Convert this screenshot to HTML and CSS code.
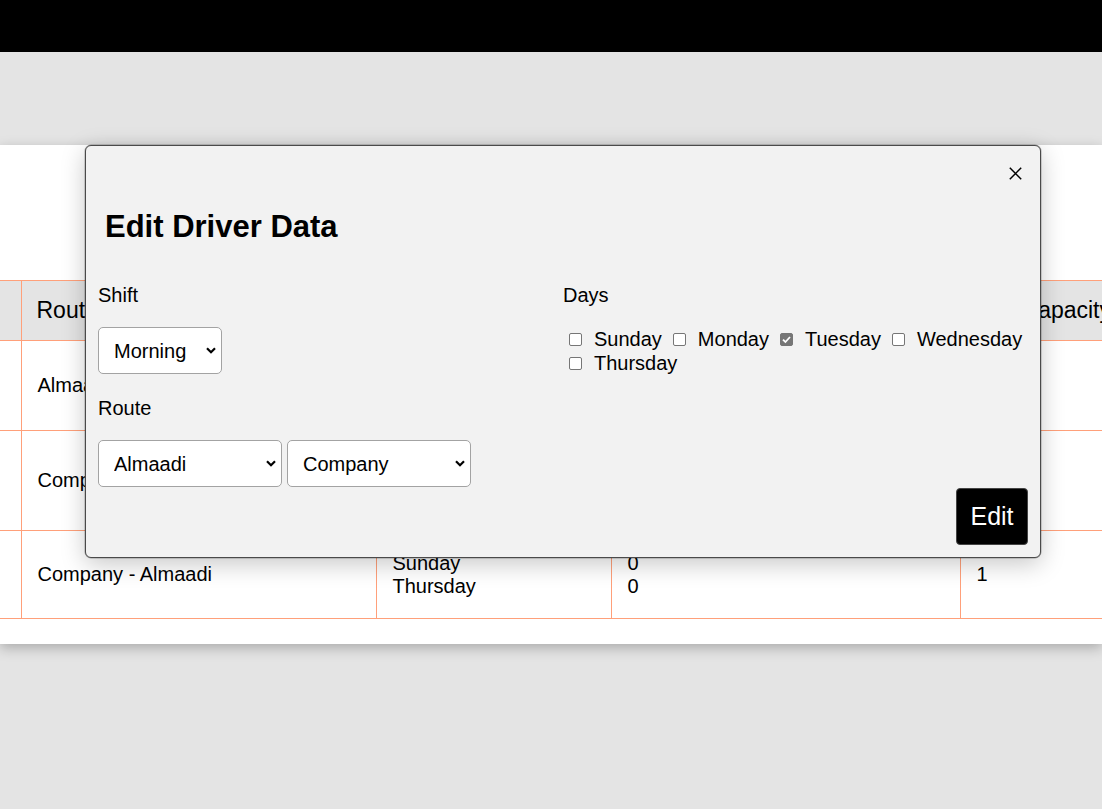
FILE: index.html
```html
<!DOCTYPE html>
<html lang="en">
<head>
<meta charset="utf-8">
<title>Drivers</title>
<link rel="stylesheet" href="styles.css">
</head>
<body>
<header class="topbar"></header>
<main class="page">
  <section class="card">
    <table class="drivers">
      <colgroup>
        <col class="c1"><col class="c2"><col class="c3"><col class="c4"><col class="c5">
      </colgroup>
      <thead>
        <tr><th></th><th>Route</th><th>Days</th><th>Seats</th><th>Bus Capacity</th></tr>
      </thead>
      <tbody>
        <tr class="r1"><td></td><td>Almaadi - Company</td><td>Tuesday</td><td>0</td><td>1</td></tr>
        <tr class="r2"><td></td><td>Company - Almaadi</td><td>Monday<br>Wednesday</td><td>0<br>0</td><td>1</td></tr>
        <tr class="r3"><td></td><td>Company - Almaadi</td><td>Sunday<br>Thursday</td><td>0<br>0</td><td>1</td></tr>
      </tbody>
    </table>
  </section>
</main>

<div class="modal">
  <div class="modal-top">
    <button class="close" type="button" aria-label="Close">
      <svg width="13" height="13" viewBox="0 0 13 13"><path d="M0.8 0.8 L12.2 12.2 M12.2 0.8 L0.8 12.2" stroke="#000" stroke-width="1.5" fill="none"/></svg>
    </button>
  </div>
  <h2 class="modal-title">Edit Driver Data</h2>
  <div class="form">
    <div class="col">
      <span class="field-label">Shift</span>
      <div class="select-row">
        <div class="select w-shift">
          <select><option>Morning</option><option>Evening</option></select>
          <svg class="chev" width="10" height="7" viewBox="0 0 10 7"><path d="M1 1.2 L5 5.2 L9 1.2" stroke="#000" stroke-width="2.2" fill="none"/></svg>
        </div>
      </div>
      <span class="field-label">Route</span>
      <div class="select-row last">
        <div class="select w-route">
          <select><option>Almaadi</option><option>Company</option></select>
          <svg class="chev" width="10" height="7" viewBox="0 0 10 7"><path d="M1 1.2 L5 5.2 L9 1.2" stroke="#000" stroke-width="2.2" fill="none"/></svg>
        </div>
        <div class="select w-route">
          <select><option>Company</option><option>Almaadi</option></select>
          <svg class="chev" width="10" height="7" viewBox="0 0 10 7"><path d="M1 1.2 L5 5.2 L9 1.2" stroke="#000" stroke-width="2.2" fill="none"/></svg>
        </div>
      </div>
    </div>
    <div class="col">
      <span class="field-label">Days</span>
      <div class="days">
        <label class="day"><span class="box"></span>Sunday</label>
        <label class="day"><span class="box"></span>Monday</label>
        <label class="day"><span class="box checked"><svg width="11" height="11" viewBox="0 0 11 11"><path d="M2 5.6 L4.4 8 L9 3" stroke="#fff" stroke-width="1.8" fill="none"/></svg></span>Tuesday</label>
        <label class="day"><span class="box"></span>Wednesday</label>
        <label class="day"><span class="box"></span>Thursday</label>
      </div>
    </div>
  </div>
  <div class="modal-footer">
    <button class="edit-btn" type="button">Edit</button>
  </div>
</div>
</body>
</html>
```

FILE: styles.css
```css
* { box-sizing: border-box; }
html, body { margin: 0; padding: 0; overflow: hidden; }
body {
  position: relative;
  width: 1102px;
  height: 809px;
  background: #e4e4e4;
  font-family: "Liberation Sans", Arial, sans-serif;
  color: #000;
}
.topbar { height: 52px; background: #000; }
.page { padding-top: 93px; }
.card {
  background: #fff;
  padding: 135px 0 25px;
  box-shadow: 0 4px 12px rgba(0, 0, 0, 0.25);
  overflow: hidden;
}
.drivers {
  border-collapse: collapse;
  table-layout: fixed;
  width: 1260px;
  font-size: 20px;
}
.c1 { width: 21px; }
.c2 { width: 355px; }
.c3 { width: 235px; }
.c4 { width: 349px; }
.c5 { width: 300px; }
.drivers th, .drivers td {
  border: 1px solid #ffa07a;
  padding: 0 16px;
  text-align: left;
  vertical-align: middle;
  font-weight: normal;
  white-space: nowrap;
  overflow: hidden;
}
.drivers tr > :first-child { border-left: none; padding: 0; }
.drivers th { background: #e4e4e4; font-size: 23px; padding-left: 15px; }
.drivers thead tr { height: 60px; }
.r1 { height: 90px; }
.r2 { height: 100px; }
.r3 { height: 88px; }

.modal {
  position: absolute;
  left: 85px;
  top: 145px;
  width: 956px;
  background: #f2f2f2;
  border: 1px solid #4a4a4a;
  border-radius: 6px;
  padding: 12px;
  box-shadow: 0 0 0 0.5px rgba(0, 0, 0, 0.3), 0 6px 24px rgba(0, 0, 0, 0.22);
}
.modal-top { display: flex; justify-content: flex-end; }
.close {
  width: 26px;
  height: 26px;
  margin-top: 2px;
  padding: 0;
  border: 0;
  background: none;
  display: flex;
  align-items: center;
  justify-content: center;
}
.modal-title {
  margin: 23px 0 0 7px;
  font-size: 31px;
  line-height: 36px;
  font-weight: bold;
}
.form {
  display: grid;
  grid-template-columns: 1fr 1fr;
  margin-top: 39px;
}
.field-label {
  display: block;
  font-size: 20px;
  line-height: 23px;
  margin-bottom: 20px;
}
.select-row { display: flex; gap: 5px; margin-bottom: 23px; }
.select-row.last { margin-bottom: 0; }
.select { display: inline-grid; }
.select > * { grid-area: 1 / 1; }
.w-shift { width: 124px; }
.w-route { width: 184px; }
.select select {
  appearance: none;
  -webkit-appearance: none;
  width: 100%;
  height: 47px;
  margin: 0;
  border: 1px solid #a3a3a3;
  border-radius: 5px;
  background: #fff;
  color: #000;
  font-family: "Liberation Sans", Arial, sans-serif;
  font-size: 20px;
  padding: 0 0 0 15px;
}
.chev {
  justify-self: end;
  align-self: center;
  margin-right: 6px;
  pointer-events: none;
}
.days {
  display: flex;
  flex-wrap: wrap;
  column-gap: 5px;
  font-size: 20px;
  line-height: 24px;
}
.day {
  display: inline-flex;
  align-items: center;
  gap: 12px;
  padding-left: 6px;
}
.box {
  width: 13px;
  height: 13px;
  border: 1px solid #767676;
  border-radius: 2px;
  background: #fff;
  display: flex;
  align-items: center;
  justify-content: center;
}
.box.checked { background: #767676; }
.modal-footer {
  display: flex;
  justify-content: flex-end;
  margin-top: 1px;
}
.edit-btn {
  width: 72px;
  height: 57px;
  padding: 0;
  border: 1px solid #444;
  border-radius: 4px;
  background: #000;
  color: #fff;
  font-family: "Liberation Sans", Arial, sans-serif;
  font-size: 25px;
}
```
